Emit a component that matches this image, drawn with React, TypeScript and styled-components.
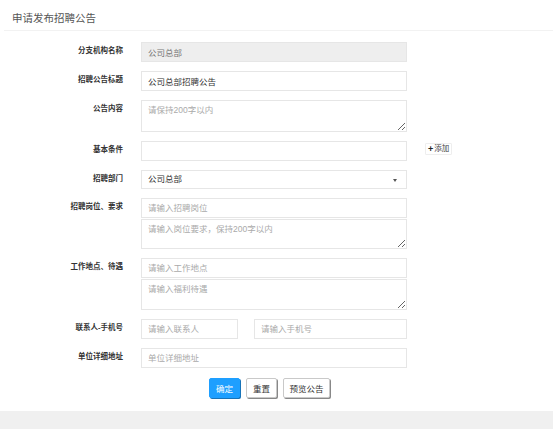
import React from "react";
import styled, { createGlobalStyle } from "styled-components";

const GlobalStyle = createGlobalStyle`
  html, body {
    margin: 0;
    padding: 0;
    background: #f0f0f0;
    font-family: "Liberation Sans", "Noto Sans CJK SC", sans-serif;
  }
  * { box-sizing: border-box; }
`;

const Panel = styled.div`
  background: #fff;
  padding-bottom: 13px;
`;

const Header = styled.div`
  margin-left: 4px;
  padding: 12px 0 0 8px;
  height: 31px;
  font-size: 10.5px;
  line-height: 12px;
  color: #555;
  border-bottom: 1px solid #f2f2f2;
`;

const Form = styled.form`
  padding-top: 11px;
  display: flex;
  flex-direction: column;
  gap: 9px;
`;

const Row = styled.div`
  display: grid;
  grid-template-columns: 141px 266px auto;
  align-items: start;
`;

const Label = styled.label`
  padding: 4px 18px 0 0;
  text-align: right;
  font-size: 7.5px;
  line-height: 10px;
  font-weight: bold;
  color: #333;
`;

const Stack = styled.div`
  display: flex;
  flex-direction: column;
  gap: 1px;
`;

const Pair = styled.div`
  display: grid;
  grid-template-columns: 97px 153px;
  gap: 16px;
`;

const Input = styled.input<{ $disabled?: boolean }>`
  width: 100%;
  height: 20px;
  padding: 0 6px;
  border: 1px solid #e6e6e6;
  background: ${(p) => (p.$disabled ? "#eee" : "#fff")};
  font-family: inherit;
  font-size: 8.5px;
  color: ${(p) => (p.$disabled ? "#777" : "#333")};
  outline: none;
  &::placeholder { color: #aaa; }
`;

const Area = styled.textarea<{ $h: number }>`
  width: 100%;
  height: ${(p) => p.$h}px;
  padding: 4px 6px;
  border: 1px solid #e6e6e6;
  font-family: inherit;
  font-size: 8.5px;
  line-height: 11px;
  color: #333;
  outline: none;
  display: block;
  &::placeholder { color: #aaa; }
`;

const Select = styled.div`
  position: relative;
  height: 19px;
  padding: 0 6px;
  border: 1px solid #e6e6e6;
  font-size: 8.5px;
  line-height: 17px;
  color: #333;
  &::after {
    content: "";
    position: absolute;
    right: 9px;
    top: 8px;
    border-left: 2.5px solid transparent;
    border-right: 2.5px solid transparent;
    border-top: 3px solid #555;
  }
`;

const AddButton = styled.button`
  justify-self: start;
  margin: 2px 0 0 18px;
  height: 12px;
  padding: 0 2px;
  border: 1px solid #eee;
  border-radius: 1px;
  background: #fff;
  font-family: inherit;
  font-size: 7.5px;
  line-height: 10px;
  color: #444;
  display: flex;
  align-items: center;
  gap: 1px;
  b { font-size: 9px; color: #222; }
`;

const Actions = styled.div`
  display: flex;
  gap: 6px;
  padding-left: 209px;
  padding-top: 1px;
`;

const Button = styled.button<{ $primary?: boolean; $w: number }>`
  width: ${(p) => p.$w}px;
  height: 20px;
  padding: 0;
  border: 1px solid ${(p) => (p.$primary ? "#1e9fff" : "#c9c9c9")};
  border-radius: 2px;
  background: ${(p) => (p.$primary ? "#1e9fff" : "#fff")};
  color: ${(p) => (p.$primary ? "#fff" : "#333")};
  font-family: inherit;
  font-size: 8.5px;
  box-shadow: 1px 1px 0 ${(p) => (p.$primary ? "#1873b8" : "#888")};
`;

export default function App() {
  return (
    <>
      <GlobalStyle />
      <Panel>
        <Header>申请发布招聘公告</Header>
        <Form onSubmit={(e) => e.preventDefault()}>
          <Row>
            <Label>分支机构名称</Label>
            <Input $disabled readOnly value="公司总部" />
          </Row>
          <Row>
            <Label>招聘公告标题</Label>
            <Input defaultValue="公司总部招聘公告" />
          </Row>
          <Row>
            <Label>公告内容</Label>
            <Area $h={32} placeholder="请保持200字以内" />
          </Row>
          <Row>
            <Label>基本条件</Label>
            <Input />
            <AddButton type="button"><b>+</b>添加</AddButton>
          </Row>
          <Row>
            <Label>招聘部门</Label>
            <Select>公司总部</Select>
          </Row>
          <Row>
            <Label>招聘岗位、要求</Label>
            <Stack>
              <Input placeholder="请输入招聘岗位" />
              <Area $h={30} placeholder="请输入岗位要求，保持200字以内" />
            </Stack>
          </Row>
          <Row>
            <Label>工作地点、待遇</Label>
            <Stack>
              <Input placeholder="请输入工作地点" />
              <Area $h={31} placeholder="请输入福利待遇" />
            </Stack>
          </Row>
          <Row>
            <Label>联系人-手机号</Label>
            <Pair>
              <Input placeholder="请输入联系人" />
              <Input placeholder="请输入手机号" />
            </Pair>
          </Row>
          <Row>
            <Label>单位详细地址</Label>
            <Input placeholder="单位详细地址" />
          </Row>
          <Actions>
            <Button type="button" $primary $w={31}>确定</Button>
            <Button type="button" $w={31}>重置</Button>
            <Button type="button" $w={47}>预览公告</Button>
          </Actions>
        </Form>
      </Panel>
    </>
  );
}
